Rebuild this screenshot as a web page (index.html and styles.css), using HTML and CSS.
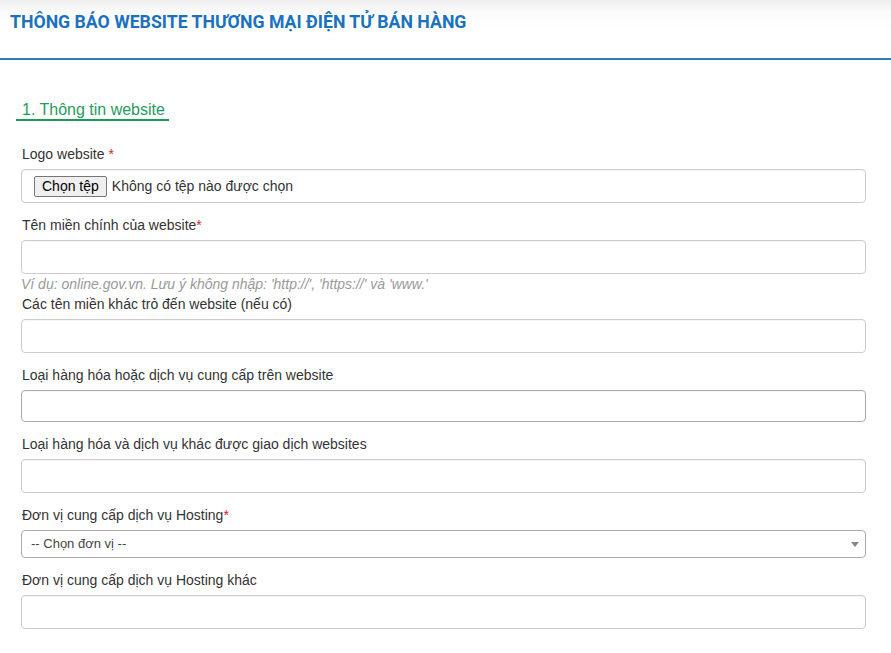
FILE: index.html
```html
<!DOCTYPE html>
<html lang="vi">
<head>
<meta charset="utf-8">
<title>Thông báo website</title>
<link rel="stylesheet" href="styles.css">
</head>
<body>
<header class="page-header">
  <h1 class="page-title">THÔNG BÁO WEBSITE THƯƠNG MẠI ĐIỆN TỬ BÁN HÀNG</h1>
</header>
<main class="content">
  <h2 class="section-title">1. Thông tin website</h2>
  <form class="form">
    <div class="group">
      <label class="label">Logo website <span class="req">*</span></label>
      <div class="control file-control">
        <span class="file-btn">Chọn tệp</span>
        <span class="file-text">Không có tệp nào được chọn</span>
      </div>
    </div>
    <div class="group group-help">
      <label class="label">Tên miền chính của website<span class="req">*</span></label>
      <input class="control" type="text">
      <div class="help">Ví dụ: online.gov.vn. Lưu ý không nhập: 'http://', 'https://' và 'www.'</div>
    </div>
    <div class="group">
      <label class="label">Các tên miền khác trỏ đến website (nếu có)</label>
      <input class="control" type="text">
    </div>
    <div class="group">
      <label class="label">Loại hàng hóa hoặc dịch vụ cung cấp trên website</label>
      <input class="control control-dark" type="text">
    </div>
    <div class="group">
      <label class="label">Loại hàng hóa và dịch vụ khác được giao dịch websites</label>
      <input class="control" type="text">
    </div>
    <div class="group">
      <label class="label">Đơn vị cung cấp dịch vụ Hosting<span class="req">*</span></label>
      <div class="select">
        <span class="select-text">-- Chọn đơn vị --</span>
        <span class="select-arrow"></span>
      </div>
    </div>
    <div class="group">
      <label class="label">Đơn vị cung cấp dịch vụ Hosting khác</label>
      <input class="control" type="text">
    </div>
  </form>
</main>
</body>
</html>
```
FILE: styles.css
```css
* { box-sizing: border-box; }
html, body { margin: 0; padding: 0; background: #fff; }
body {
  font-family: "Liberation Sans", Arial, sans-serif;
  font-size: 14px;
  line-height: 20px;
  color: #333;
}
.page-header {
  height: 60px;
  background: linear-gradient(#efefef 0, #fafafa 12px, #fff 30px);
  border-bottom: 2px solid #337ab7;
  padding: 12px 10px 0;
}
.page-title {
  margin: 0;
  font-family: Roboto, "Liberation Sans", sans-serif;
  font-weight: 700;
  font-size: 17.7px;
  line-height: 20px;
  color: #1a72bf;
  letter-spacing: 0;
}
.content {
  padding: 39px 25px 0 21px;
}
.section-title {
  display: inline-block;
  margin: 0 0 23px -5px;
  padding: 2px 4px 0 6px;
  font-weight: 400;
  font-size: 16px;
  line-height: 18px;
  color: #1f9d5c;
  border-bottom: 2px solid #1a9b5a;
}
.form { display: flex; flex-direction: column; }
.group {
  display: flex;
  flex-direction: column;
  margin-bottom: 12px;
}
.group-help { margin-bottom: 0; }
.label {
  display: block;
  margin: 0 0 5px 1px;
  line-height: 20px;
}
.req { color: #d9212c; }
.control {
  display: block;
  width: 100%;
  height: 34px;
  padding: 6px 12px;
  font: inherit;
  color: #555;
  background: #fff;
  border: 1px solid #ccc;
  border-radius: 4px;
  box-shadow: inset 0 1px 1px rgba(0,0,0,0.04);
  outline: none;
}
.control-dark {
  height: 32px;
  border-color: #aaa;
}
.file-control {
  display: flex;
  align-items: center;
  padding: 0 12px;
  color: #333;
}
.file-btn {
  display: inline-block;
  height: 21px;
  line-height: 19px;
  padding: 0 7px;
  margin-right: 5px;
  background: #efefef;
  border: 1px solid #767676;
  border-radius: 2px;
  color: #000;
  font-size: 14px;
}
.file-text { color: #333; }
.help {
  color: #999;
  font-style: italic;
  line-height: 20px;
}
.select {
  position: relative;
  height: 28px;
  border: 1px solid #aaa;
  border-radius: 4px;
  background: #fff;
  padding: 0 20px 0 9px;
  display: flex;
  align-items: center;
}
.select-text { color: #444; font-size: 13px; }
.select-arrow {
  position: absolute;
  right: 6px;
  top: 11px;
  width: 0;
  height: 0;
  border-style: solid;
  border-width: 5px 4px 0 4px;
  border-color: #888 transparent transparent transparent;
}
```
